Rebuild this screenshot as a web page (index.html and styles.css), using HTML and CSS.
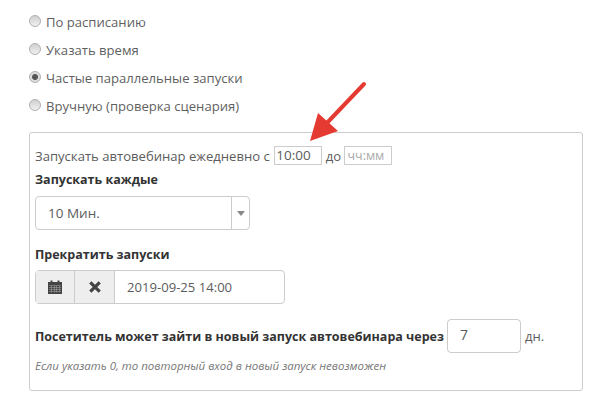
FILE: index.html
```html
<!DOCTYPE html>
<html lang="ru">
<head>
<meta charset="utf-8">
<title>Запуски</title>
<link rel="stylesheet" href="styles.css">
</head>
<body>
<div class="page">
  <div class="radios">
    <label class="radio"><span class="dot"></span>По расписанию</label>
    <label class="radio"><span class="dot"></span>Указать время</label>
    <label class="radio"><span class="dot on"></span>Частые параллельные запуски</label>
    <label class="radio"><span class="dot"></span>Вручную (проверка сценария)</label>
  </div>
  <div class="box">
    <div class="daily">Запускать автовебинар ежедневно с <span class="mini val">10:00</span> до <span class="mini ph">чч:мм</span></div>
    <div class="label l1">Запускать каждые</div>
    <div class="select"><span class="sel-text">10 Мин.</span><span class="sel-arrow"><i></i></span></div>
    <div class="label l2">Прекратить запуски</div>
    <div class="group">
      <span class="addon">
        <svg width="14" height="14" viewBox="0 0 14 14"><path fill="#444" d="M0 2h2.500V0.500h2V2h5V0.500h2V2H14v12H0z"/><path fill="#aaa" d="M1 5.500h12v.5H1zM1 7.500h12v.5H1zM1 9.500h12v.5H1zM1 11.500h12v.5H1zM3.500 5.500h.5v7h-.5zM6 5.500h.5v7H6zM8.500 5.500h.5v7h-.5zM11 5.500h.5v7H11z"/></svg>
      </span>
      <span class="addon second">
        <svg width="12" height="12" viewBox="0 0 12 12"><path fill="none" stroke="#444" stroke-width="3.200" d="M1.300 1.300l9.400 9.400M10.700 1.300l-9.400 9.400"/></svg>
      </span>
      <span class="date">2019-09-25 14:00</span>
    </div>
    <div class="visitor"><b>Посетитель может зайти в новый запуск автовебинара через</b><span class="num">7</span><span class="unit">дн.</span></div>
    <div class="hint">Если указать 0, то повторный вход в новый запуск невозможен</div>
  </div>
  <svg class="arrow" width="70" height="72" viewBox="0 0 70 72"><path fill="none" stroke="#e53a32" stroke-width="4" stroke-linecap="round" d="M55 14L16 55"/><path fill="#e53a32" d="M1 71L9 43L29 61z"/></svg>
</div>
</body>
</html>
```
FILE: styles.css
```css
* { box-sizing: border-box; }
html, body { margin: 0; padding: 0; }
body { background: #fff; font-family: "Open Sans", "Liberation Sans", sans-serif; font-size: 13.100px; color: #5c5c5c; }
.page { position: relative; width: 610px; height: 401px; padding: 8px 27px 0 29px; overflow: hidden; }
.radios { display: flex; flex-direction: column; }
.radio { display: flex; align-items: center; height: 28px; gap: 5px; color: #5f5f5f; }
.dot { width: 12px; height: 12px; border-radius: 50%; border: 1px solid #b0b0b0; background: linear-gradient(#d0d0d0, #f0f0f0); display: block; margin-top: -2px; }
.dot.on { background: radial-gradient(circle, #555 0 2.500px, #dcdcdc 3.500px); }
.box { margin-top: 12px; height: 259px; border: 1px solid #ccc; border-radius: 3px; padding: 13px 5px 0 5px; }
.daily { display: flex; align-items: center; height: 19px; white-space: pre; }
.mini { display: inline-block; height: 19px; border: 1px solid #ccc; }
.val { width: 48px; margin-left: 1px; padding-left: 1px; line-height: 17px; font-size: 13.500px; }
.ph { width: 48px; line-height: 17px; font-size: 12.500px; color: #aaa; padding-left: 2px; }
.label { font-weight: 700; color: #333; font-size: 12.500px; }
.l1 { margin-top: 5px; height: 19px; line-height: 19px; }
.select { display: flex; margin-top: 7px; width: 215px; height: 34px; border: 1px solid #ccc; border-radius: 4px; }
.sel-text { flex: 1; padding-left: 12px; line-height: 32px; font-size: 13.500px; }
.sel-arrow { width: 18px; border-left: 1px solid #ccc; display: flex; align-items: center; justify-content: center; }
.sel-arrow i { border: 4px solid transparent; border-top: 5px solid #888; border-bottom: 0; }
.l2 { margin-top: 15px; height: 19px; line-height: 19px; }
.group { display: flex; margin-top: 6px; width: 250px; height: 34px; border: 1px solid #ccc; border-radius: 4px; }
.addon { width: 39px; background: #eee; border-right: 1px solid #ccc; display: flex; align-items: center; justify-content: center; }
.addon.second { width: 40px; }
.date { flex: 1; padding-left: 12px; line-height: 32px; }
.visitor { display: flex; align-items: center; margin-top: 15px; height: 34px; white-space: nowrap; }
.visitor b { color: #333; font-size: 12.500px; width: 412px; flex: none; }
.num { width: 74px; height: 34px; flex: none; border: 1px solid #ccc; border-radius: 4px; padding-left: 12px; line-height: 30px; font-size: 14px; }
.unit { margin-left: 4px; }
.hint { margin-top: 5px; font-size: 11.470px; font-style: italic; color: #777; }
.arrow { position: absolute; left: 309px; top: 70px; }
```
